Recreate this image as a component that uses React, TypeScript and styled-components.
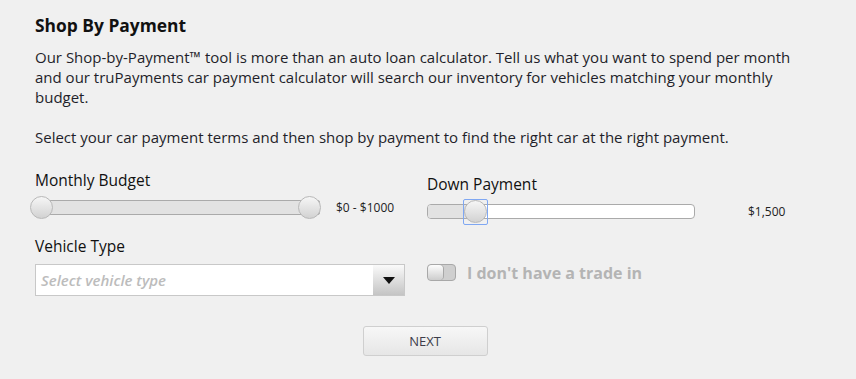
import React from 'react'
import styled, { createGlobalStyle } from 'styled-components'

const GlobalStyle = createGlobalStyle`
  html, body {
    margin: 0;
    background: #f0f0f0;
  }
  body {
    font-family: "Open Sans", "Noto Sans", sans-serif;
    color: #1a1a1a;
  }
`

const Page = styled.div`
  padding: 14px 35px 20px;
`

const Title = styled.h2`
  margin: 0 0 11px;
  font-size: 17.4px;
  line-height: 22px;
  font-weight: 700;
  color: #111;
`

const Intro = styled.p`
  margin: 0 0 20px;
  max-width: 768px;
  font-size: 15px;
  line-height: 20px;
  color: #1f1f2a;
`

const FormGrid = styled.div`
  display: grid;
  grid-template-columns: 370px 1fr;
  column-gap: 22px;
  margin-top: 23px;
`

const Field = styled.div<{ $offset?: number }>`
  display: flex;
  flex-direction: column;
  padding-top: ${p => p.$offset || 0}px;
`

const Label = styled.div<{ $gap?: number }>`
  font-size: 15.5px;
  line-height: 20px;
  color: #111;
  margin-bottom: ${p => p.$gap ?? 6}px;
`

const SliderRow = styled.div`
  display: flex;
  align-items: center;
  height: 23px;
`

const Track = styled.div<{ $width: number; $white?: boolean }>`
  position: relative;
  width: ${p => p.$width}px;
  height: 15px;
  box-sizing: border-box;
  border: 1px solid #aaa;
  border-radius: ${p => (p.$white ? 4 : 2)}px;
  background: ${p => (p.$white ? '#fff' : '#e2e2e2')};
`

const Fill = styled.div`
  position: absolute;
  left: 0;
  top: 0;
  bottom: 0;
  background: #e2e2e2;
  border-radius: 3px 0 0 3px;
`

const Handle = styled.div`
  position: absolute;
  top: 50%;
  width: 23px;
  height: 23px;
  margin-top: -12px;
  box-sizing: border-box;
  border-radius: 50%;
  border: 1px solid #b8b8b8;
  background: linear-gradient(#f6f6f6, #d2d2d2);
`

const FocusRing = styled.div`
  position: absolute;
  top: 50%;
  width: 25px;
  height: 26px;
  margin-top: -13px;
  box-sizing: border-box;
  border: 1px solid #7fa7f2;
  border-radius: 2px;
  display: flex;
  align-items: center;
  justify-content: center;

  & > ${Handle} {
    position: static;
    margin: 0;
  }
`

const Value = styled.span<{ $gap: number }>`
  margin-left: ${p => p.$gap}px;
  font-size: 12px;
  color: #222;
  white-space: nowrap;
`

const Select = styled.div`
  display: flex;
  height: 32px;
  width: 370px;
  box-sizing: border-box;
  border: 1px solid #c8c8c8;
  background: #fff;
`

const Placeholder = styled.div`
  flex: 1;
  display: flex;
  align-items: center;
  padding-left: 5px;
  font-size: 15px;
  font-style: italic;
  font-weight: 600;
  color: #bcbcbc;
`

const ArrowBox = styled.div`
  width: 31px;
  display: flex;
  align-items: center;
  justify-content: center;
  background: linear-gradient(#fafafa, #c4c4c4);
`

const Arrow = styled.div`
  width: 0;
  height: 0;
  border-left: 6px solid transparent;
  border-right: 6px solid transparent;
  border-top: 7px solid #111;
`

const ToggleRow = styled.label`
  display: flex;
  align-items: center;
  gap: 11px;
  margin-top: 41px;
  height: 17px;
`

const Switch = styled.div`
  position: relative;
  width: 29px;
  height: 17px;
  box-sizing: border-box;
  border: 1px solid #a8a8a8;
  border-radius: 4px;
  background: #cfcfcf;
`

const Knob = styled.div`
  position: absolute;
  left: 0;
  top: 0;
  width: 15px;
  height: 15px;
  border-radius: 4px;
  box-shadow: 1px 0 0 #a8a8a8;
  background: linear-gradient(#fdfdfd, #cdcdcd);
`

const ToggleText = styled.span`
  font-size: 16px;
  font-weight: 700;
  color: #b4b4b4;
`

const Actions = styled.div`
  display: flex;
  justify-content: center;
  margin-top: 30px;
  padding-right: 6px;
`

const NextButton = styled.button`
  width: 125px;
  height: 30px;
  border: 1px solid #cfcfcf;
  border-radius: 3px;
  background: linear-gradient(#f7f7f7, #e6e6e6);
  font-family: "Open Sans", "Noto Sans", sans-serif;
  font-size: 13px;
  color: #3d3d4a;
  cursor: pointer;
`

export default function App() {
  const downPct = 48

  return (
    <Page>
      <GlobalStyle />
      <Title>Shop By Payment</Title>
      <Intro>
        Our Shop-by-Payment™ tool is more than an auto loan calculator. Tell us what you want to spend per month
        and our truPayments car payment calculator will search our inventory for vehicles matching your monthly
        budget.
      </Intro>
      <Intro>Select your car payment terms and then shop by payment to find the right car at the right payment.</Intro>

      <FormGrid>
        <Field>
          <Label>Monthly Budget</Label>
          <SliderRow>
            <Track $width={285}>
              <Handle style={{ left: -6 }} />
              <Handle style={{ right: -2 }} />
            </Track>
            <Value $gap={16}>$0 - $1000</Value>
          </SliderRow>
        </Field>

        <Field $offset={4}>
          <Label>Down Payment</Label>
          <SliderRow>
            <Track $width={268} $white>
              <Fill style={{ width: downPct }} />
              <FocusRing style={{ left: downPct - 13 }}>
                <Handle />
              </FocusRing>
            </Track>
            <Value $gap={53}>$1,500</Value>
          </SliderRow>
        </Field>

        <Field $offset={13}>
          <Label $gap={8}>Vehicle Type</Label>
          <Select>
            <Placeholder>Select vehicle type</Placeholder>
            <ArrowBox>
              <Arrow />
            </ArrowBox>
          </Select>
        </Field>

        <Field>
          <ToggleRow>
            <Switch>
              <Knob />
            </Switch>
            <ToggleText>I don't have a trade in</ToggleText>
          </ToggleRow>
        </Field>
      </FormGrid>

      <Actions>
        <NextButton>NEXT</NextButton>
      </Actions>
    </Page>
  )
}
